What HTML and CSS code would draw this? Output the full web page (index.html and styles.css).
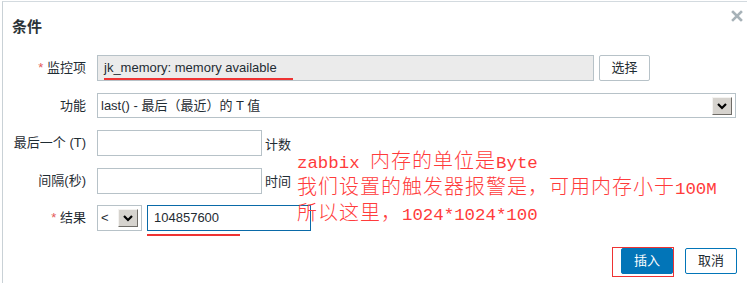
FILE: index.html
```html
<!DOCTYPE html>
<html lang="zh-CN">
<head>
    <meta charset="UTF-8">
    <title>条件</title>
    <link rel="stylesheet" href="styles.css">
</head>
<body>
    <div class="shot">
        <div class="dialog">
            <div class="dialog-head">
                <h4>条件</h4>
                <span class="close">
                    <svg width="12" height="12" viewBox="0 0 12 12"><path d="M2 2 L10 10 M10 2 L2 10" stroke="#a7b2b8" stroke-width="2.6" stroke-linecap="square"/></svg>
                </span>
            </div>

            <div class="form">
                <div class="lbl"><span class="req">*</span> 监控项</div>
                <div class="ctrl">
                    <div class="field readonly item">jk_memory: memory available</div>
                    <div class="btn-alt pick">选择</div>
                </div>

                <div class="lbl">功能</div>
                <div class="ctrl">
                    <div class="field select func">
                        <span>last() - 最后（最近）的 T 值</span>
                        <span class="arrow"><svg width="12" height="8" viewBox="0 0 12 8"><path d="M2 2 L6 6 L10 2" fill="none" stroke="#000" stroke-width="2.2"/></svg></span>
                    </div>
                </div>

                <div class="lbl">最后一个 (T)</div>
                <div class="ctrl">
                    <div class="field short"></div>
                    <span class="unit">计数</span>
                </div>

                <div class="lbl">间隔(秒)</div>
                <div class="ctrl">
                    <div class="field short"></div>
                    <span class="unit">时间</span>
                </div>

                <div class="lbl"><span class="req">*</span> 结果</div>
                <div class="ctrl">
                    <div class="field select op">
                        <span>&lt;</span>
                        <span class="arrow"><svg width="12" height="8" viewBox="0 0 12 8"><path d="M2 2 L6 6 L10 2" fill="none" stroke="#000" stroke-width="2.2"/></svg></span>
                    </div>
                    <div class="field focus value">104857600</div>
                </div>
            </div>

            <div class="footer">
                <div class="btn primary">插入</div>
                <div class="btn alt">取消</div>
            </div>
        </div>

        <!-- annotations drawn over the screenshot -->
        <div class="mark line-item"></div>
        <div class="mark line-value"></div>
        <div class="mark box-insert"></div>
        <div class="note">
            <div>zabbix <span class="cj">内存的单位是</span>Byte</div>
            <div><span class="cj">我们设置的触发器报警是，可用内存小于</span>100M</div>
            <div><span class="cj">所以这里，</span>1024*1024*100</div>
        </div>
    </div>
</body>
</html>
```

FILE: styles.css
```css
* {
    margin: 0;
    padding: 0;
    box-sizing: border-box;
}

body {
    font-family: "Liberation Sans", Arial, "Noto Sans CJK SC", sans-serif;
    font-size: 13px;
    color: #1f2c33;
    background: #fff;
    width: 747px;
    height: 283px;
    overflow: hidden;
}

.shot {
    position: relative;
    height: 283px;
    padding: 1px 0 0 2px;
}

.dialog {
    height: 282px;
    border-top: 1px solid #d3dadf;
    border-left: 1px solid #c9d1d6;
    padding: 15px 10px 0 9px;
}

.dialog-head {
    display: flex;
    justify-content: space-between;
    align-items: flex-start;
    height: 20px;
}

.dialog-head h4 {
    font-size: 15px;
    font-weight: bold;
    line-height: 20px;
    color: #2b3338;
}

.close {
    margin-top: -7px;
    margin-right: -6px;
    width: 12px;
    height: 12px;
}

.form {
    margin-top: 18px;
    display: grid;
    grid-template-columns: 74px 1fr;
    grid-auto-rows: 26px;
    column-gap: 11px;
    row-gap: 11.5px;
}

.lbl {
    text-align: right;
    line-height: 26px;
    white-space: nowrap;
}

.req {
    color: #e45959;
}

.ctrl {
    display: flex;
    align-items: center;
    gap: 5px;
}

.field {
    height: 26px;
    border: 1px solid #b7c2c8;
    background: #fff;
    line-height: 24px;
    padding: 0 6px;
    white-space: nowrap;
}

.readonly {
    background: #ebebeb;
}

.item {
    width: 497px;
}

.btn-alt {
    height: 26px;
    border: 1px solid #b7c2c8;
    border-radius: 2px;
    line-height: 24px;
    text-align: center;
}

.pick {
    width: 51px;
}

.select {
    display: flex;
    justify-content: space-between;
    align-items: center;
    padding: 0 3px 0 3px;
}

.func {
    width: 639px;
    height: 25px;
}

.arrow {
    width: 20px;
    height: 18px;
    background: #d6d3ce;
    border: 1px solid;
    border-color: #f4f3f1 #6f6c67 #6f6c67 #f4f3f1;
    display: flex;
    align-items: center;
    justify-content: center;
}

.short {
    width: 165px;
}

.unit {
    margin-left: -2px;
}

.op {
    width: 45px;
}

.focus {
    border-color: #0a6aa8;
}

.value {
    width: 164px;
    padding-left: 6px;
}

.footer {
    margin-top: 17px;
    display: flex;
    justify-content: flex-end;
    gap: 12px;
}

.btn {
    width: 52px;
    height: 26px;
    border-radius: 2px;
    line-height: 24px;
    text-align: center;
    border: 1px solid #0275b8;
}

.primary {
    background: #0275b8;
    color: #fff;
}

.alt {
    background: #fff;
    color: #1f2c33;
}

.mark {
    position: absolute;
}

.line-item {
    left: 104px;
    top: 78px;
    width: 189px;
    height: 2px;
    background: #ee3333;
}

.line-value {
    left: 147px;
    top: 234px;
    width: 93px;
    height: 2px;
    background: #ee3333;
}

.box-insert {
    left: 612px;
    top: 247px;
    width: 62px;
    height: 30px;
    border: 1px solid #ee3333;
}

.note {
    position: absolute;
    left: 297px;
    top: 150px;
    color: #ff3b3b;
    font-family: "Liberation Mono", "Noto Sans CJK SC", monospace;
    font-size: 17.4px;
    line-height: 24px;
    white-space: nowrap;
}

.note .cj {
    font-family: "Noto Sans CJK SC", sans-serif;
    font-size: 20px;
    font-weight: 300;
    letter-spacing: 1px;
    line-height: 1;
}
```
